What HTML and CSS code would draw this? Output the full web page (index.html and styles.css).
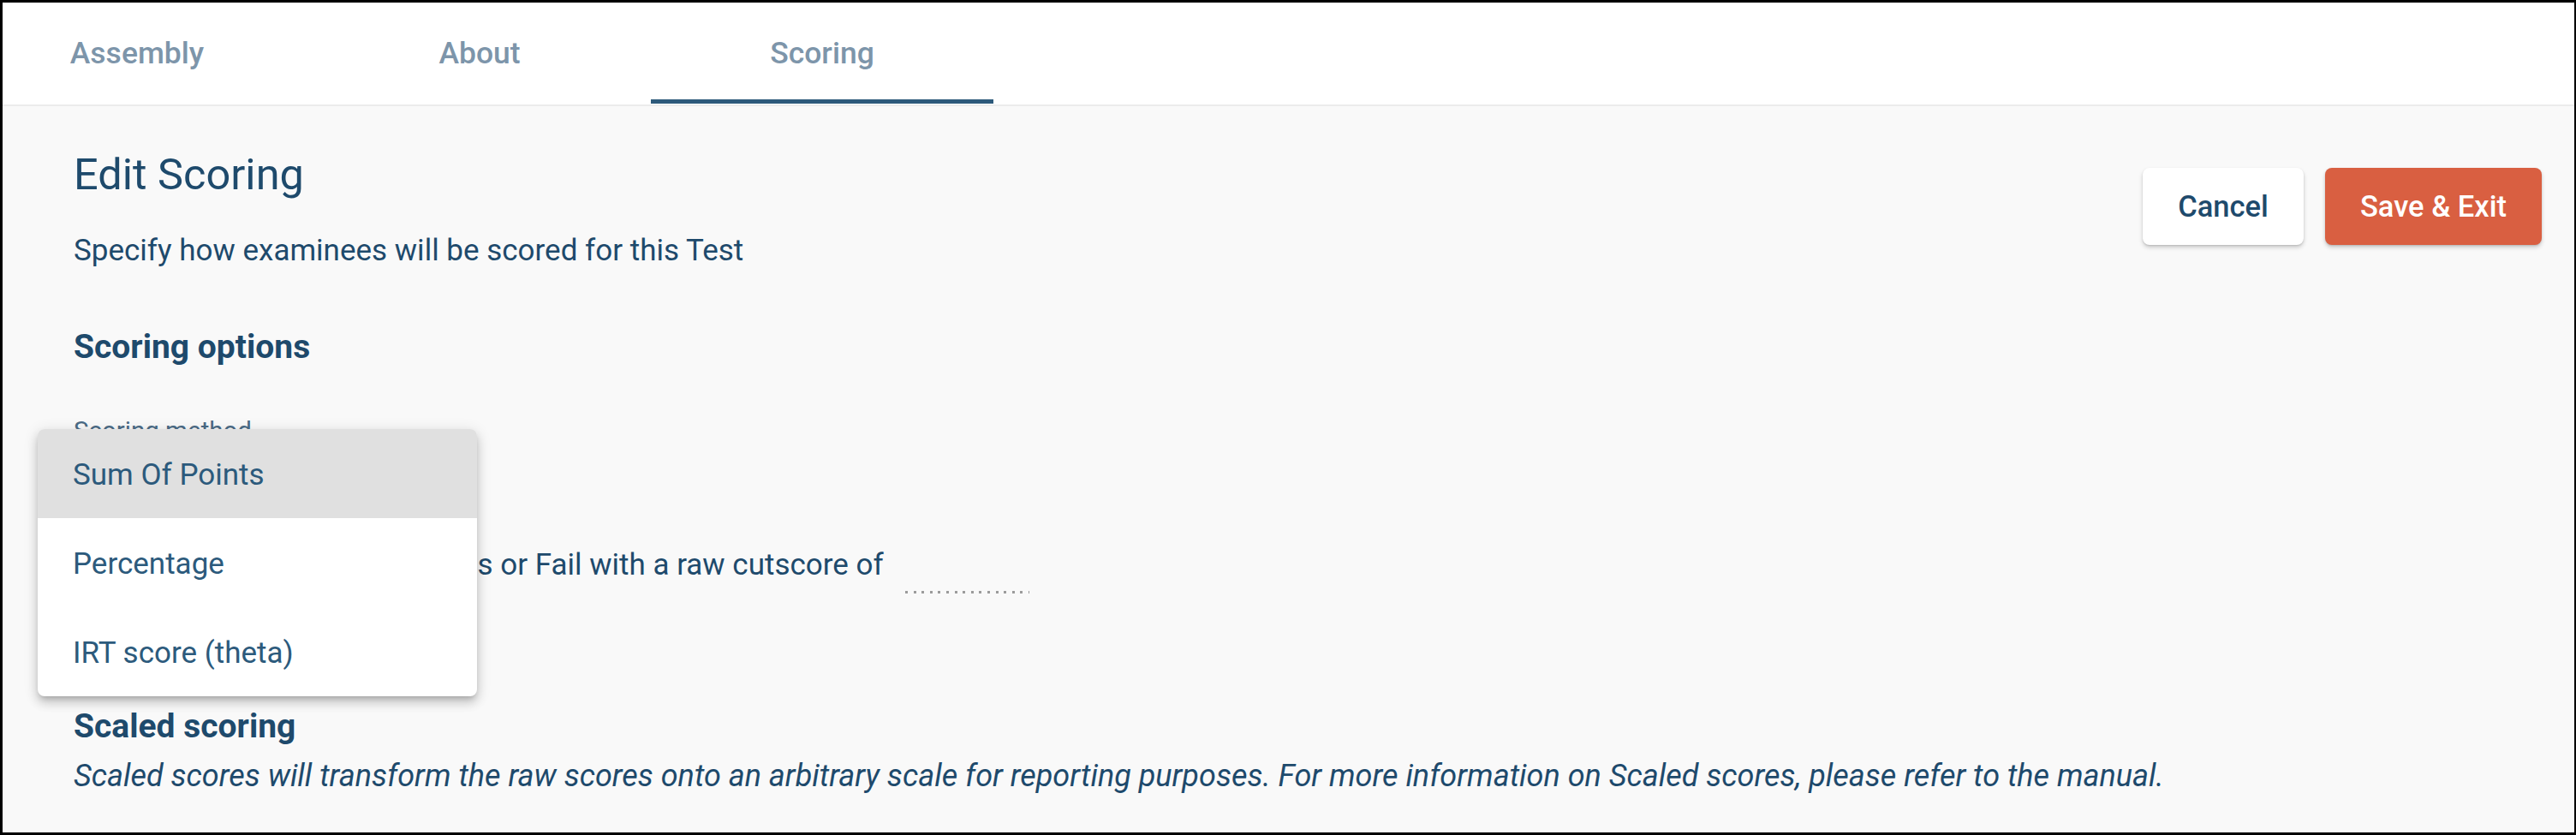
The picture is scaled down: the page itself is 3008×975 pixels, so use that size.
FILE: index.html
```html
<!DOCTYPE html>
<html lang="en">
<head>
<meta charset="utf-8">
<title>Edit Scoring</title>
<link rel="stylesheet" href="styles.css">
</head>
<body>
<div class="frame">
  <nav class="tabs">
    <div class="tab">Assembly</div>
    <div class="tab">About</div>
    <div class="tab active">Scoring</div>
  </nav>
  <main class="content">
    <header class="header">
      <div class="intro">
        <h1 class="title">Edit Scoring</h1>
        <p class="subtitle">Specify how examinees will be scored for this Test</p>
      </div>
      <div class="actions">
        <button class="btn btn-cancel">Cancel</button>
        <button class="btn btn-save">Save &amp; Exit</button>
      </div>
    </header>
    <section class="options">
      <h2 class="section-title">Scoring options</h2>
      <div class="field">
        <label class="field-label">Scoring method</label>
        <div class="select">Sum Of Points</div>
      </div>
      <div class="cut-row">
        <span class="checkbox"></span>
        <span class="cut-text">Report the result as Pass or Fail with a raw cutscore of</span>
        <span class="cut-input"></span>
      </div>
    </section>
    <section class="scaled">
      <h2 class="section-title">Scaled scoring</h2>
      <p class="note">Scaled scores will transform the raw scores onto an arbitrary scale for reporting purposes. For more information on Scaled scores, please refer to the manual.</p>
    </section>
  </main>
  <ul class="menu">
    <li class="menu-item selected">Sum Of Points</li>
    <li class="menu-item">Percentage</li>
    <li class="menu-item">IRT score (theta)</li>
  </ul>
</div>
</body>
</html>
```

FILE: styles.css
```css
* { box-sizing: border-box; }
html, body { margin: 0; padding: 0; }
body {
  font-family: Roboto, "Noto Sans", "Liberation Sans", sans-serif;
  background: #000;
}
.frame {
  position: relative;
  width: 3008px;
  height: 975px;
  border: 3px solid #000;
  border-right-width: 2px;
  background: #f9f9f9;
  display: flex;
  flex-direction: column;
  overflow: hidden;
}
.tabs {
  display: flex;
  background: #fff;
  height: 121px;
  padding-bottom: 1px;
  border-bottom: 2px solid #ececec;
}
.tab {
  width: 400px;
  height: 118px;
  display: flex;
  align-items: center;
  justify-content: center;
  font-size: 35.5px;
  font-weight: 500;
  color: #7d95aa;
  padding-top: 4px;
  border-bottom: 5px solid transparent;
}
.tab:first-child { margin-left: -43px; }
.tab.active { border-bottom-color: #2d5a7b; }

.content {
  flex: 1;
  padding: 52px 38px 0 83px;
  color: #1e4a6c;
}
.header {
  display: flex;
  justify-content: space-between;
  align-items: flex-start;
}
.title {
  margin: 0;
  font-size: 50.5px;
  line-height: 56px;
  font-weight: 400;
}
.subtitle {
  margin: 41px 0 0;
  font-size: 35px;
  line-height: 40px;
}
.actions {
  display: flex;
  gap: 25px;
  padding-top: 20px;
}
.btn {
  font-family: inherit;
  font-size: 34.5px;
  font-weight: 500;
  height: 90px;
  border: none;
  border-radius: 8px;
  box-shadow: 0 3px 5px rgba(0,0,0,0.18), 0 1px 2px rgba(0,0,0,0.12);
}
.btn-cancel {
  width: 188px;
  background: #fff;
  color: #1e4a6c;
}
.btn-save {
  width: 253px;
  background: #d95f41;
  color: #fff;
}
.section-title {
  margin: 0;
  font-size: 39px;
  line-height: 46px;
  font-weight: 700;
}
.options { margin-top: 69px; }
.field { margin-top: 58px; }
.field-label {
  display: block;
  font-size: 29.5px;
  line-height: 34px;
  color: #4b6b86;
}
.select {
  font-size: 35px;
  line-height: 50px;
  width: 400px;
  border-bottom: 1px solid #8a9aa8;
}
.cut-row {
  display: flex;
  align-items: flex-start;
  margin-top: 69px;
  font-size: 35px;
  line-height: 40px;
}
.checkbox {
  width: 30px;
  height: 30px;
  border: 3px solid #2d5a7b;
  border-radius: 3px;
  margin: 5px 70px 0 0;
}
.cut-text { white-space: nowrap; }
.cut-input {
  width: 145px;
  height: 53px;
  margin-left: 25px;
  background-image: repeating-linear-gradient(to right, #9c9c9c 0 3px, transparent 3px 9.6px);
  background-size: 100% 3px;
  background-position: left bottom;
  background-repeat: no-repeat;
}
.scaled { margin-top: 132px; }
.note {
  margin: 13px 0 0;
  font-size: 36px;
  line-height: 44px;
  font-style: italic;
}
.menu {
  position: absolute;
  top: 498px;
  left: 41px;
  width: 513px;
  margin: 0;
  padding: 0;
  list-style: none;
  background: #fff;
  border-radius: 8px;
  overflow: hidden;
  box-shadow: 0 5px 6px -3px rgba(0,0,0,0.2), 0 8px 12px 1px rgba(0,0,0,0.12), 0 3px 16px 2px rgba(0,0,0,0.1);
}
.menu-item {
  height: 104px;
  display: flex;
  align-items: center;
  padding: 2px 0 0 41px;
  font-size: 35px;
  color: #2c5a7c;
}
.menu-item.selected { background: #e0e0e0; }
```
